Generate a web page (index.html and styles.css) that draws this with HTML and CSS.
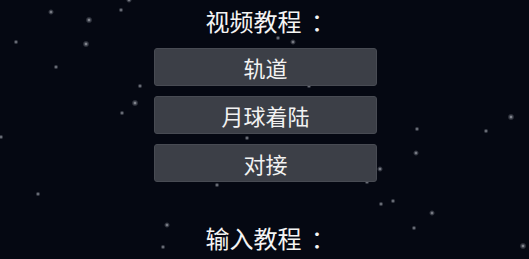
FILE: index.html
```html
<!DOCTYPE html>
<html lang="zh-CN">
<head>
<meta charset="utf-8">
<title>教程</title>
<link rel="stylesheet" href="styles.css">
</head>
<body>
<svg class="stars" width="529" height="259" viewBox="0 0 529 259" aria-hidden="true">
  <defs>
    <radialGradient id="glow">
      <stop offset="0" stop-color="#ffffff" stop-opacity="0.8"/>
      <stop offset="0.35" stop-color="#c8cdd8" stop-opacity="0.4"/>
      <stop offset="1" stop-color="#c8cdd8" stop-opacity="0"/>
    </radialGradient>
  </defs>
  <g fill="url(#glow)">
    <circle cx="51" cy="12" r="3"/>
    <circle cx="89" cy="20" r="3.5"/>
    <circle cx="16" cy="42" r="2.5"/>
    <circle cx="86" cy="44" r="3.5"/>
    <circle cx="56" cy="67" r="2.5"/>
    <circle cx="140" cy="86" r="2.5"/>
    <circle cx="135" cy="103" r="3.5"/>
    <circle cx="122" cy="113" r="2.5"/>
    <circle cx="1" cy="137" r="2.5"/>
    <circle cx="38" cy="194" r="2.5"/>
    <circle cx="129" cy="0" r="3"/>
    <circle cx="121" cy="10" r="2.5"/>
    <circle cx="278" cy="38" r="2.5"/>
    <circle cx="293" cy="42" r="3"/>
    <circle cx="309" cy="86" r="2.5"/>
    <circle cx="247" cy="138" r="2.5"/>
    <circle cx="260" cy="132" r="2.5"/>
    <circle cx="217" cy="185" r="2.5"/>
    <circle cx="167" cy="225" r="3"/>
    <circle cx="163" cy="247" r="2.5"/>
    <circle cx="367" cy="182" r="2.5"/>
    <circle cx="380" cy="169" r="3"/>
    <circle cx="511" cy="117" r="3.5"/>
    <circle cx="417" cy="129" r="2.5"/>
    <circle cx="486" cy="131" r="2.5"/>
    <circle cx="416" cy="153" r="3"/>
    <circle cx="381" cy="204" r="2.5"/>
    <circle cx="393" cy="201" r="2.5"/>
    <circle cx="432" cy="213" r="3"/>
    <circle cx="414" cy="228" r="2.5"/>
    <circle cx="523" cy="246" r="3.5"/>
  </g>
</svg>
<main class="panel">
  <h2 class="heading">视频教程<span class="colon">：</span></h2>
  <div class="btn-list">
    <button class="btn" type="button">轨道</button>
    <button class="btn" type="button">月球着陆</button>
    <button class="btn" type="button">对接</button>
  </div>
  <h2 class="heading heading-second">输入教程<span class="colon">：</span></h2>
</main>
</body>
</html>
```
FILE: styles.css
```css
html, body {
  margin: 0;
  padding: 0;
}
body {
  background: #050812;
  color: #f2f2f2;
  font-family: "Noto Sans CJK SC", "Noto Sans", sans-serif;
  width: 529px;
  height: 259px;
  overflow: hidden;
  position: relative;
}
.stars {
  position: absolute;
  left: 0;
  top: 0;
}
.panel {
  position: relative;
  display: flex;
  flex-direction: column;
  align-items: center;
  padding-top: 4px;
  padding-left: 2px;
}
.heading {
  margin: 0;
  font-size: 24px;
  font-weight: 400;
  line-height: 34px;
  color: #f4f4f4;
}
.colon {
  display: inline-block;
  width: 1em;
  padding-left: 0.4em;
  box-sizing: border-box;
}
.btn-list {
  display: flex;
  flex-direction: column;
  gap: 10px;
  margin-top: 10px;
}
.btn {
  width: 223px;
  height: 38px;
  border: 1px solid #484b53;
  border-radius: 3px;
  background: #3c3f47;
  color: #f2f2f2;
  font-family: inherit;
  font-size: 22px;
  line-height: 1;
  padding: 0;
  display: flex;
  align-items: center;
  justify-content: center;
}
.heading-second {
  margin-top: 39px;
}
```
